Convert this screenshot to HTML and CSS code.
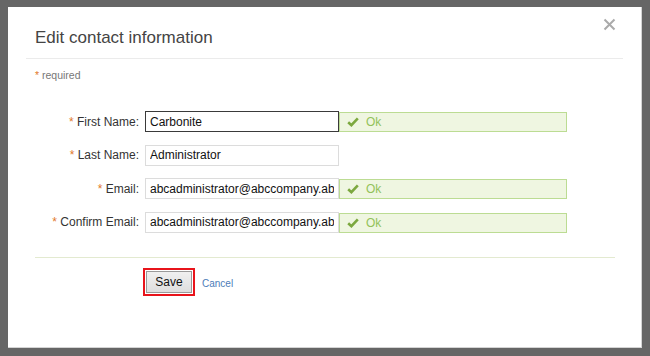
FILE: index.html
```html
<!doctype html>
<html>
  <head>
    <title>Edit contact information</title>
    <link rel="stylesheet" href="styles.css">
  </head>
  <body>
    <div class="dialog">
      <div class="dialog-header">
        <h1 class="dialog-title">Edit contact information</h1>
        <button class="close-button" title="Close">
          <svg width="13" height="13" viewBox="0 0 13 13">
            <path d="M1.5 1.5 L11.5 11.5 M11.5 1.5 L1.5 11.5" stroke="#aaa" stroke-width="2" fill="none"/>
          </svg>
        </button>
      </div>

      <div class="required-note"><span class="req">*</span> required</div>

      <form class="contact-form">
        <div class="form-row">
          <label class="form-label"><span class="req">*</span> First Name:</label>
          <input class="form-input focused" type="text" value="Carbonite">
          <div class="valid-box">
            <svg width="12" height="10" viewBox="0 0 12 10">
              <path d="M1.2 5.2 L4.4 8.2 L10.8 1.4" stroke="#7ca83f" stroke-width="2.6" fill="none"/>
            </svg>
            <span>Ok</span>
          </div>
        </div>

        <div class="form-row">
          <label class="form-label"><span class="req">*</span> Last Name:</label>
          <input class="form-input" type="text" value="Administrator">
        </div>

        <div class="form-row">
          <label class="form-label"><span class="req">*</span> Email:</label>
          <input class="form-input" type="text" value="abcadministrator@abccompany.ab">
          <div class="valid-box">
            <svg width="12" height="10" viewBox="0 0 12 10">
              <path d="M1.2 5.2 L4.4 8.2 L10.8 1.4" stroke="#7ca83f" stroke-width="2.6" fill="none"/>
            </svg>
            <span>Ok</span>
          </div>
        </div>

        <div class="form-row">
          <label class="form-label"><span class="req">*</span> Confirm Email:</label>
          <input class="form-input" type="text" value="abcadministrator@abccompany.ab">
          <div class="valid-box">
            <svg width="12" height="10" viewBox="0 0 12 10">
              <path d="M1.2 5.2 L4.4 8.2 L10.8 1.4" stroke="#7ca83f" stroke-width="2.6" fill="none"/>
            </svg>
            <span>Ok</span>
          </div>
        </div>

        <div class="form-actions">
          <button class="save-button" type="button">Save</button>
          <a class="cancel-link" href="#">Cancel</a>
        </div>
      </form>
    </div>
  </body>
</html>
```

FILE: styles.css
```css
* {
  box-sizing: border-box;
  margin: 0;
  padding: 0;
}

html,
body {
  height: 100%;
  overflow: hidden;
}

body {
  font-family: 'Liberation Sans', Arial, sans-serif;
  background: #666;
  padding: 7px 8px 8px 8px;
}

.dialog {
  height: 341px;
  background: #fff;
  border-right: 1px solid #d4d4d4;
  border-bottom: 1px solid #d4d4d4;
}

.dialog-header {
  display: flex;
  justify-content: space-between;
  align-items: flex-start;
  margin: 0 18px;
  padding: 21px 0 10px 9px;
  border-bottom: 1px solid #ebebeb;
}

.dialog-title {
  font-size: 17px;
  font-weight: normal;
  color: #444;
  line-height: 20px;
}

.close-button {
  background: none;
  border: none;
  cursor: pointer;
  margin: -10px 7px 0 0;
  display: flex;
}

.req {
  color: #e2792b;
}

.required-note {
  font-size: 10.5px;
  color: #777;
  padding-left: 27px;
  margin-top: 10px;
  line-height: 13px;
}

.contact-form {
  margin-top: 29px;
  display: flex;
  flex-direction: column;
  gap: 12.6px;
}

.form-row {
  display: flex;
  align-items: center;
  height: 21px;
}

.form-label {
  width: 131px;
  margin-right: 6px;
  text-align: right;
  font-size: 12px;
  color: #333;
}

.form-input {
  width: 194px;
  height: 21px;
  padding: 0 4px;
  border: 1px solid #dcdcdc;
  font-family: 'Liberation Sans', Arial, sans-serif;
  font-size: 12px;
  color: #111;
  outline: none;
}

.form-input.focused {
  border-color: #3a3a3a;
}

.valid-box {
  width: 228px;
  height: 20px;
  margin-top: 1px;
  display: flex;
  align-items: center;
  gap: 7px;
  padding-left: 7px;
  background: #eff6e1;
  border: 1px solid #bcdc93;
  font-size: 12px;
  color: #93c25a;
}

.form-actions {
  display: flex;
  align-items: center;
  margin: 12px 26px 0 27px;
  padding: 13px 0 0 111px;
  border-top: 1px solid #e3ead0;
}

.save-button {
  width: 46px;
  height: 22px;
  font-family: 'Liberation Sans', Arial, sans-serif;
  font-size: 12px;
  color: #111;
  background: linear-gradient(#f0f0f0, #dedede);
  border: 1px solid #9a9a9a;
  border-radius: 0;
  outline: 2px solid #e8141b;
  outline-offset: 1px;
  cursor: pointer;
}

.cancel-link {
  margin-left: 10px;
  margin-top: 2px;
  font-size: 10px;
  color: #4d7db8;
  text-decoration: none;
}
```
